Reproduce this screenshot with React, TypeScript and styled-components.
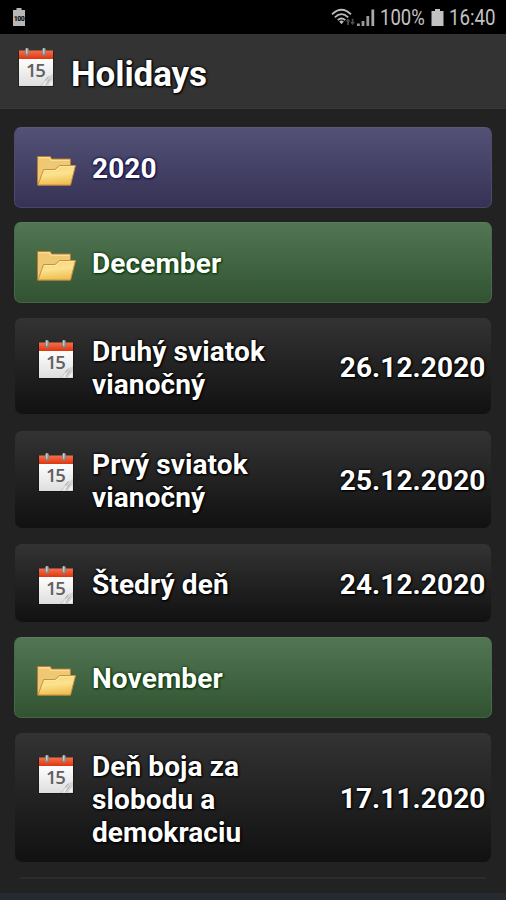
import React from "react";
import styled, { createGlobalStyle, css } from "styled-components";

const GlobalStyle = createGlobalStyle`
  * { box-sizing: border-box; }
  html, body { margin: 0; background: #222; overflow: hidden; }
  body { font-family: Roboto, "Noto Sans", sans-serif; color: #fff; }
  svg { display: block; flex: none; text-shadow: none; }
`;

const Screen = styled.div`
  width: 506px;
  height: 900px;
  overflow: hidden;
  display: flex;
  flex-direction: column;
  background: #222;
`;

const StatusBar = styled.div`
  flex: none;
  height: 34px;
  padding: 0 10px 0 12px;
  display: flex;
  align-items: center;
  justify-content: space-between;
  background: #000;
  color: #c2c2c2;
`;

const StatusGroup = styled.div`
  display: flex;
  align-items: center;
`;

const StatusText = styled.span<{ $width: number; $squeeze: number }>`
  width: ${(p) => p.$width}px;
  font-size: 22px;
  line-height: 34px;
  white-space: nowrap;
  padding-top: 1px;
  transform: scaleX(${(p) => p.$squeeze});
  transform-origin: left center;
`;

const Header = styled.header`
  flex: none;
  height: 75px;
  padding: 12px 17px 0;
  display: flex;
  background: #333;
  border-bottom: 1px solid #373737;
`;

const outline = css`
  text-shadow: 0 0 2px #000, 0 0 3px #000, 1px 1px 2px #000;
`;

const Title = styled.h1`
  margin: 7.5px 0 0 16px;
  font-size: 35px;
  line-height: 42px;
  font-weight: 700;
  letter-spacing: -0.1px;
  ${outline}
`;

const List = styled.main`
  flex: 1;
  min-height: 0;
  overflow: hidden;
  padding: 18px 14px 0 14.4px;
  display: flex;
  flex-direction: column;
`;

const folderTones = {
  year: css`
    background: linear-gradient(#545177, #353255);
    border-color: #5b587c #4d4a6c #48456a;
    text-shadow: 0 0 2px #15104c, 0 0 3px #15104c, 1px 1px 2px #15104c;
  `,
  month: css`
    background: linear-gradient(#527653, #315331);
    border-color: #5a7d5b #46694a #446644;
    text-shadow: 0 0 2px #0b3b0b, 0 0 3px #0b3b0b, 1px 1px 2px #0b3b0b;
  `,
};

const FolderRow = styled.section<{ $tone: "year" | "month" }>`
  flex: none;
  height: 81px;
  margin-bottom: 14px;
  padding: 2px 22px 0 20.6px;
  display: flex;
  align-items: center;
  gap: 15px;
  border: 1px solid;
  border-radius: 7px;
  font-size: 28px;
  line-height: 33px;
  font-weight: 700;
  letter-spacing: 0.12px;
  ${(p) => folderTones[p.$tone]}
`;

const FolderSlot = styled.div`
  padding-top: 5px;
`;

const EventRow = styled.article<{ $height: number; $gap: number }>`
  flex: none;
  height: ${(p) => p.$height}px;
  margin: 1px 1px ${(p) => p.$gap}px;
  padding: 17px 5.5px 0 21.6px;
  display: flex;
  align-items: flex-start;
  border-radius: 7px;
  background: linear-gradient(#333, #111);
  box-shadow: 0 0 1px #303030;
  font-size: 28px;
  line-height: 33px;
  font-weight: 700;
  letter-spacing: 0.1px;
  ${outline}
`;

const EventName = styled.div`
  align-self: stretch;
  display: flex;
  align-items: center;
  width: 210px;
  margin-left: 17px;
  padding-bottom: 14px;
  white-space: pre-line;
`;

const EventDate = styled.time`
  align-self: stretch;
  flex: 1;
  display: flex;
  align-items: center;
  justify-content: flex-end;
  padding-bottom: 15px;
  white-space: nowrap;
`;

const CalendarSlot = styled.div`
  margin-top: 3px;
`;

const NextRowEdge = styled.div`
  flex: none;
  height: 2px;
  margin: 0 6px;
  background: #2c2c2c;
`;

const BottomEdge = styled.footer`
  flex: none;
  height: 7px;
  background: #252b30;
`;

function CalendarIcon() {
  return (
    <svg width="38" height="42" viewBox="0 0 38 42">
      <defs>
        <linearGradient id="page" x2="0" y2="1">
          <stop stopColor="#fff" />
          <stop offset="1" stopColor="#dedede" />
        </linearGradient>
        <linearGradient id="band" x2="0" y2="1">
          <stop stopColor="#f4714b" />
          <stop offset="1" stopColor="#df3510" />
        </linearGradient>
      </defs>
      <path d="M1 5h36v36H1z" fill="#090909" opacity=".35" />
      <path d="M2 12h34v28H2z" fill="url(#page)" />
      <path d="M2 4.5h34V13H2z" fill="url(#band)" />
      <rect x="8" y="2" width="4" height="8" rx="2" fill="#858585" />
      <rect x="9" y="2" width="1.5" height="6" rx=".75" fill="#c9c9c9" />
      <rect x="25" y="2" width="4" height="8" rx="2" fill="#858585" />
      <rect x="26" y="2" width="1.5" height="6" rx=".75" fill="#c9c9c9" />
      <text x="18.3" y="31" textAnchor="middle" fontFamily="Open Sans" fontSize="18.5" fontWeight="600" letterSpacing="-1.2" fill="#606060">15</text>
      <path d="M36 28v12H22l6-5 1-3z" fill="#d0d0d0" opacity=".8" />
      <path d="M25.5 39.5l3-4 2.5-.5-2 4.5zM31 39.5l4.5-6V39z" fill="#f1f1f1" />
      <path d="M28 34.5l3.5-4M28.5 39l3-4.5 2-1.5" fill="none" stroke="#a5a5a5" strokeWidth=".8" />
    </svg>
  );
}

function FolderIcon() {
  return (
    <svg width="41" height="32" viewBox="0 0 41 32">
      <defs>
        <linearGradient id="folderFront" x2=".2" y2="1">
          <stop stopColor="#f6cf70" />
          <stop offset=".5" stopColor="#fce391" />
          <stop offset="1" stopColor="#efc154" />
        </linearGradient>
      </defs>
      <path d="M1.5 1.5h13l1 2.5h19v26h-33z" fill="#efc874" stroke="#b97c37" strokeLinejoin="round" />
      <path d="M2.7 2.8h11l1 2.5h18.7" fill="none" stroke="#ffe3a0" />
      <path d="M2 30l5.5-15.5h11.5l4.5-4H39.5L34.5 30z" fill="url(#folderFront)" stroke="#c79043" strokeLinejoin="round" />
      <path d="M8.3 15.7h11.2l4.5-4h14" fill="none" stroke="#ffeeb0" strokeWidth=".8" />
    </svg>
  );
}

function FullBatteryNotice() {
  return (
    <svg width="14" height="20" viewBox="0 0 14 20">
      <path d="M4.5 1h5v2H13v16H1V3h3.5z" fill="#b7b7b7" />
      <text x="7" y="13.7" textAnchor="middle" fontFamily="Roboto" fontSize="7" fontWeight="900" letterSpacing="-.5" fill="#111">100</text>
    </svg>
  );
}

function WifiIcon() {
  return (
    <svg width="24" height="19" viewBox="0 0 24 19">
      <g fill="none" stroke="#bbb" strokeWidth="1.8">
        <path d="M1 6.4Q10.5-2.8 20 6.4" />
        <path d="M3.8 9.3Q10.5 3 17.2 9.3" />
        <path d="M6.7 12.2Q10.5 8.7 14.3 12.2" />
      </g>
      <path d="M8.2 13.6q2.3-2 4.6 0l-2.3 2.6z" fill="#bbb" />
      <path d="M17 10.5l2.5 3h-1.6V17h-1.8v-3.5h-1.6zM21.5 17l-2.3-3h1.5v-3.3h1.8V14H24z" fill="#4d4d4d" />
    </svg>
  );
}

function SignalIcon() {
  return (
    <svg width="18" height="19" viewBox="0 0 18 19">
      <path d="M0 15.5h2.8V18H0zM4.6 13h2.8v5H4.6zM9.4 8h2.8v10H9.4z" fill="#999" />
      <path d="M14.4 1.5h2.8V18h-2.8z" fill="#aaa" />
    </svg>
  );
}

const SignalSlot = styled.div`
  margin: 0 5px 0 2px;
`;

const BatterySlot = styled.div`
  margin: 0 5px 0 5px;
`;

function BatteryIcon() {
  return (
    <svg width="13" height="19" viewBox="0 0 13 19">
      <path d="M4 1h5v2h3.5v15H.5V3H4z" fill="#c2c2c2" />
    </svg>
  );
}

type Entry =
  | { kind: "year" | "month"; name: string }
  | { kind: "event"; name: string; date: string; height: number; gap: number };

const entries: Entry[] = [
  { kind: "year", name: "2020" },
  { kind: "month", name: "December" },
  { kind: "event", name: "Druhý sviatok\nvianočný", date: "26.12.2020", height: 96, gap: 16 },
  { kind: "event", name: "Prvý sviatok\nvianočný", date: "25.12.2020", height: 97, gap: 15 },
  { kind: "event", name: "Štedrý deň", date: "24.12.2020", height: 78, gap: 15 },
  { kind: "month", name: "November" },
  { kind: "event", name: "Deň boja za\nslobodu a\ndemokraciu", date: "17.11.2020", height: 129, gap: 15 },
];

export default function App() {
  return (
    <Screen>
      <GlobalStyle />
      <StatusBar>
        <FullBatteryNotice />
        <StatusGroup>
          <WifiIcon />
          <SignalSlot><SignalIcon /></SignalSlot>
          <StatusText $width={46} $squeeze={0.84}>100%</StatusText>
          <BatterySlot><BatteryIcon /></BatterySlot>
          <StatusText $width={47} $squeeze={0.85}>16:40</StatusText>
        </StatusGroup>
      </StatusBar>
      <Header>
        <CalendarIcon />
        <Title>Holidays</Title>
      </Header>
      <List>
        {entries.map((entry, i) =>
          entry.kind === "event" ? (
            <EventRow key={i} $height={entry.height} $gap={entry.gap}>
              <CalendarSlot><CalendarIcon /></CalendarSlot>
              <EventName>{entry.name}</EventName>
              <EventDate>{entry.date}</EventDate>
            </EventRow>
          ) : (
            <FolderRow key={i} $tone={entry.kind}>
              <FolderSlot><FolderIcon /></FolderSlot>
              <span>{entry.name}</span>
            </FolderRow>
          )
        )}
        <NextRowEdge />
      </List>
      <BottomEdge />
    </Screen>
  );
}
